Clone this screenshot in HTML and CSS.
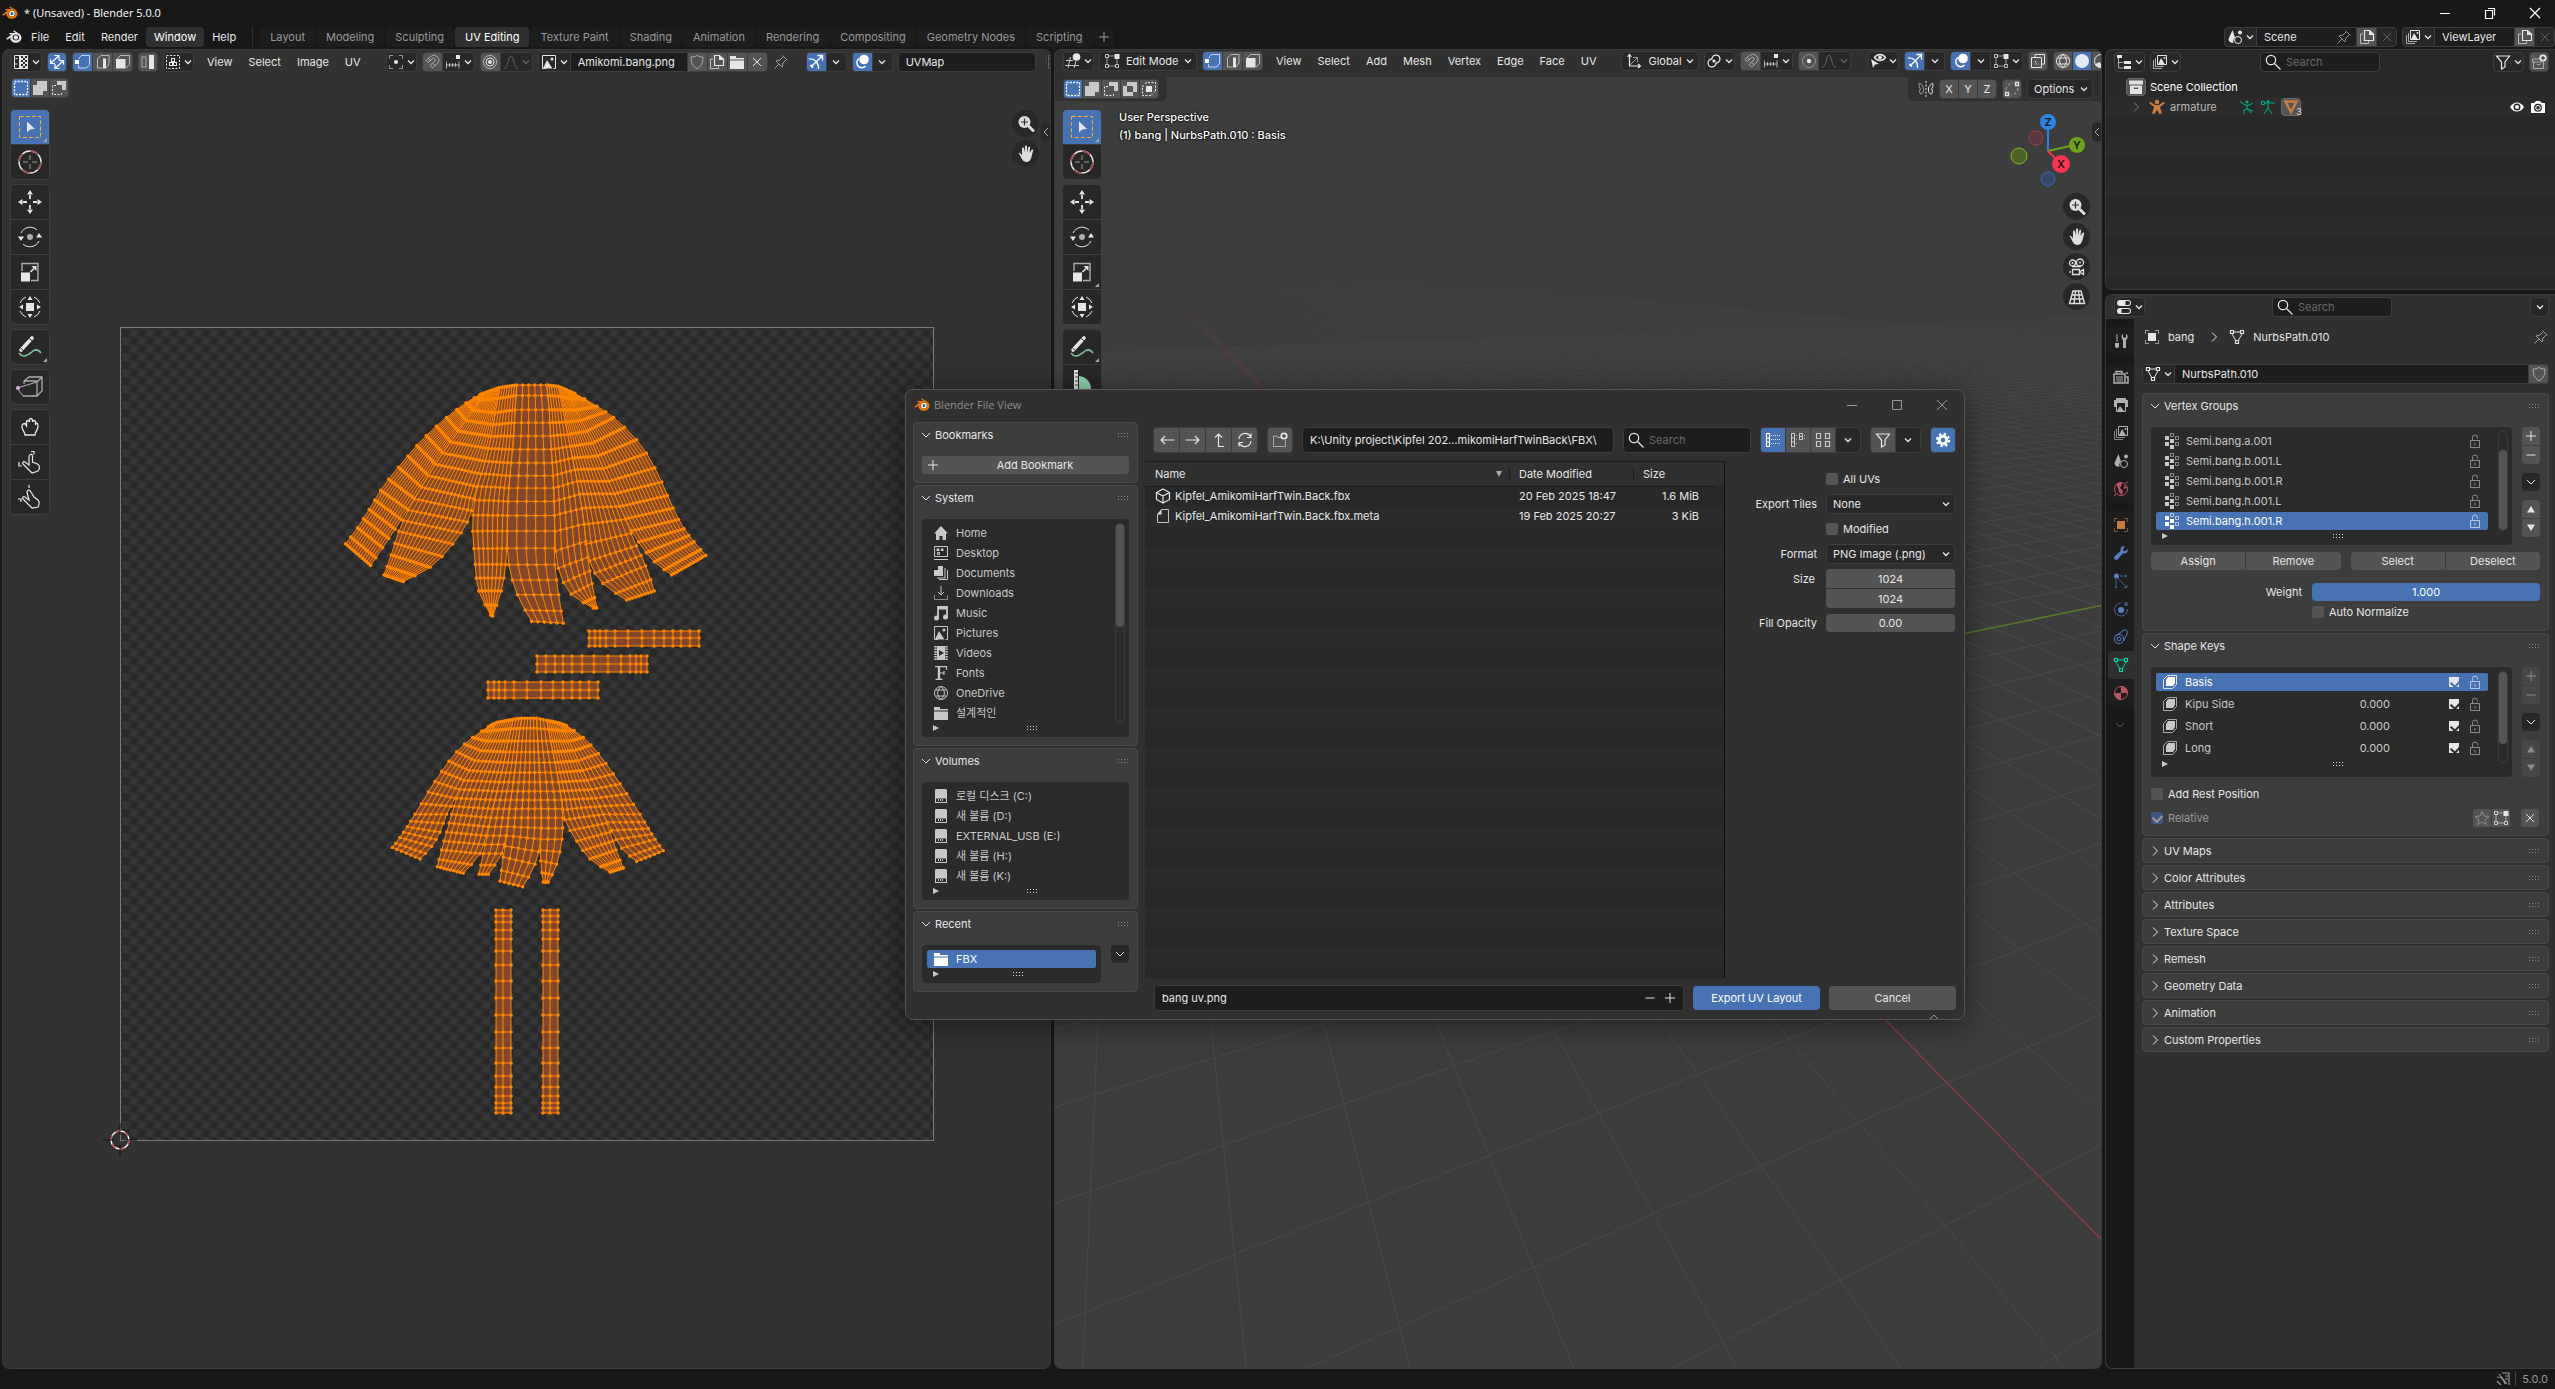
FILE: index.html
```html
<!DOCTYPE html>
<html lang="en">
<head>
<meta charset="utf-8">
<title>* (Unsaved) - Blender 5.0.0</title>
<link rel="stylesheet" href="styles.css">
</head>
<body>
<svg class="sprite" aria-hidden="true">
  <symbol id="chev" viewBox="0 0 8 16"><path d="M1 6.500l3 3 3-3" stroke-width="1.300"/></symbol>
  <symbol id="down" viewBox="0 0 16 16"><path d="M4 6l4 4 4-4"/></symbol>
  <symbol id="right" viewBox="0 0 16 16"><path d="M6 3.500l4.500 4.500-4.500 4.500"/></symbol>
  <symbol id="left" viewBox="0 0 16 16"><path d="M10 4L6 8l4 4"/></symbol>
  <symbol id="grip" viewBox="0 0 12 6"><path d="M1 1.500h10M1 4.500h10" stroke-dasharray="1 2"/></symbol>
  <symbol id="play" viewBox="0 0 8 8"><path class="f" d="M1 1l6 3-6 3z"/></symbol>
  <symbol id="blender" viewBox="0 0 16 16"><path class="f" fill-rule="evenodd" d="M8.200 1.600c-.6-.4-1.300.4-.7.900L9.400 4H3.800c-.9 0-.9 1.300 0 1.300h2L.7 9.200c-.8.7.1 1.900 1 1.200l2.600-2c0 3.200 2.500 5.400 5.600 5.400 3.200 0 5.600-2.200 5.600-5 0-1.700-.7-2.900-1.900-3.900zM9.900 5.500c1.900 0 3.300 1.300 3.300 3s-1.400 3-3.300 3-3.300-1.300-3.300-3 1.400-3 3.300-3z"/><circle class="eye" cx="9.900" cy="8.500" r="2.200"/></symbol>
  <symbol id="uved" viewBox="0 0 16 16"><path d="M1.500 1.500h5M1.500 1.500v13h5M1.500 10h3M2.500 4.500h2"/><path class="f" d="M6 1h9v14H6z"/><path stroke="#282828" stroke-width="2" d="M8 3h2M12 3h2M10 5h2M8 7h2M12 7h2M10 9h2M8 11h2M12 11h2M10 13h2"/></symbol>
  <symbol id="sync" viewBox="0 0 16 16"><path stroke-width="1.200" d="M1.500 9.500L10 1.500M10 6V1.500H5.500M6 14.500l8.500-8M6 10v4.500h4.500M1.500 5.500v4H6M14.500 10.500v-4H10"/></symbol>
  <symbol id="vert" viewBox="0 0 16 16"><path opacity=".7" d="M4.500 5V3.500l2-2h8v9l-3 3.500h-8V11"/><rect class="f" x="0" y="6" width="4" height="4"/></symbol>
  <symbol id="edge" viewBox="0 0 16 16"><path opacity=".7" d="M7.500 14h-5V5l3.500-3.500h8v8.500L11 14"/><rect class="f" x="8" y="4.500" width="3" height="10"/></symbol>
  <symbol id="face" viewBox="0 0 16 16"><path opacity=".7" d="M2 5l3.500-3.500h9v9L11 14"/><rect class="f" x="1" y="5" width="9.500" height="9.500"/></symbol>
  <symbol id="island" viewBox="0 0 16 16"><rect opacity=".6" x="2" y="3" width="4" height="10"/><rect class="f" x="9" y="1" width="5" height="14"/></symbol>
  <symbol id="sticky" viewBox="0 0 16 16"><rect x="1.500" y="1.500" width="13" height="13" stroke-dasharray="2 1.500"/><rect x="6.500" y="4.500" width="3" height="3"/><rect x="4.500" y="8.500" width="3" height="3"/><rect x="8.500" y="8.500" width="3" height="3"/></symbol>
  <symbol id="pivot" viewBox="0 0 16 16"><path opacity=".6" d="M1.500 5V1.500H5M11 1.500h3.500V5M14.500 11v3.500H11M5 14.500H1.500V11"/><circle class="f" cx="8" cy="8" r="2"/></symbol>
  <symbol id="magnet" viewBox="0 0 16 16"><path opacity=".6" d="M2 6.500l4.500-4a5 5 0 017.500 6.500L8.500 14 6 11.500l5-4.500a1.800 1.800 0 00-2.300-2.500l-4.700 4zM4.500 4.500L6.500 7M11 11.500L8.500 9.500"/></symbol>
  <symbol id="inc" viewBox="0 0 16 16"><path opacity=".7" d="M1.500 7.500v7M14 7.500v7M1.500 11H14M4.500 9v4M7.500 9v4M10.500 9v4"/><rect class="f" x="11" y="1" width="4" height="4"/></symbol>
  <symbol id="prop" viewBox="0 0 16 16"><circle class="f" cx="8" cy="8" r="2"/><circle cx="8" cy="8" r="4"/><circle opacity=".7" cx="8" cy="8" r="6.500"/></symbol>
  <symbol id="propoff" viewBox="0 0 16 16"><circle class="f" cx="8" cy="8" r="2.200"/><circle opacity=".4" cx="8" cy="8" r="6.500"/></symbol>
  <symbol id="falloff" viewBox="0 0 16 16"><path d="M1 14.500c4 0 4.500-12.500 7-12.500s3 12.500 7 12.500"/></symbol>
  <symbol id="image" viewBox="0 0 16 16"><path d="M5 14.500H1.500v-13h13v13h-2"/><path class="f" d="M2 14.500L6 6l5.500 8.500z"/><circle class="f" cx="11" cy="5" r="1.500"/></symbol>
  <symbol id="shield" viewBox="0 0 16 16"><path opacity=".6" d="M8 1.500c2 1.200 4 1.500 6 1.500 0 5-1 9-6 11.800C3 12 2 8 2 3c2 0 4-.3 6-1.500z"/></symbol>
  <symbol id="copy" viewBox="0 0 16 16"><path opacity=".7" d="M4 5H1.500v9.500h8V12"/><path stroke-width="1.200" d="M10.500 1.500h-5v10h9V5z"/><path class="f" d="M10 1v5h5z"/></symbol>
  <symbol id="folder" viewBox="0 0 16 16"><path class="f" d="M1 2h6v2h8v1.500H1zM1 6.500h14V15H1z"/></symbol>
  <symbol id="x" viewBox="0 0 16 16"><path d="M4 4l8 8M12 4l-8 8"/></symbol>
  <symbol id="pin" viewBox="0 0 16 16"><path d="M9.500 1.500l5 5M10.500 2.500L7 6 3 7l6 6 1-4 3.500-3.500M6 10l-4.500 4.500"/></symbol>
  <symbol id="gizmo" viewBox="0 0 16 16"><path stroke-width="1.300" d="M3 13l11-11M9.500 1.500h5v5M1 5c6-.5 10 4 9.500 10M2 11.500h2.500V14"/></symbol>
  <symbol id="overlay" viewBox="0 0 16 16"><circle class="f" cx="10" cy="5.500" r="4.800"/><path stroke-width="1.500" d="M5 4.500A5 5 0 1 0 11.500 12"/></symbol>
  <symbol id="selset" viewBox="0 0 16 16"><rect x="1.500" y="1.500" width="13" height="13" stroke-width="1.300" stroke-dasharray="2 1.250"/></symbol>
  <symbol id="seladd" viewBox="0 0 16 16"><path class="f" opacity=".8" d="M5 1h10v10h-4v4H1V5h4z"/></symbol>
  <symbol id="selsub" viewBox="0 0 16 16"><path class="f" opacity=".8" d="M6 1h9v9h-4V5H6z"/><path stroke-dasharray="2 1.500" d="M5 5.500H1.500v9h9V12"/></symbol>
  <symbol id="selxor" viewBox="0 0 16 16"><path class="f" opacity=".8" fill-rule="evenodd" d="M5 1h10v10h-4v4H1V5h4zm0 4v6h6V5z"/></symbol>
  <symbol id="seland" viewBox="0 0 16 16"><rect class="f" x="5" y="5" width="6" height="6"/><path stroke-dasharray="2 1.500" d="M5 3V1.500h9.500V11H13M3 5H1.500v9.500H11V13"/></symbol>
  <symbol id="tselect" viewBox="0 0 24 24"><rect x="1.500" y="1.500" width="21" height="21" stroke="#ffb030" stroke-dasharray="4 2.200"/><path class="f" d="M9 6.500v11l3-3 5-.5z"/></symbol>
  <symbol id="tcursor" viewBox="0 0 24 24"><circle cx="12" cy="12" r="11" stroke-width="1.400"/><circle cx="12" cy="12" r="11" stroke="#a84a4a" stroke-width="1.400" stroke-dasharray="8.640 8.640"/><path opacity=".6" d="M12 5v5M12 14v5M5 12h5M14 12h5"/></symbol>
  <symbol id="tmove" viewBox="0 0 24 24"><path stroke-width="1.800" d="M12 5v4M12 15v4M5 12h4M15 12h4"/><path class="f" d="M12 0l3 4.500H9zM12 24l3-4.500H9zM0 12l4.500-3v6zM24 12l-4.500-3v6z"/></symbol>
  <symbol id="trotate" viewBox="0 0 24 24"><path d="M3 8a10 10 0 0116-3M21 16a10 10 0 01-16 3"/><circle class="f" opacity=".7" cx="12" cy="12" r="3"/><path class="f" d="M0 11.500h6L3 16zM18 12.500h6L21 8z"/></symbol>
  <symbol id="tscale" viewBox="0 0 24 24"><path opacity=".7" stroke-width="1.400" d="M4 11V3.500h16v17h-7"/><rect class="f" x="3" y="12.500" width="9" height="9"/><path class="f" d="M18.500 6v5l-5-5z"/><path stroke-width="1.600" d="M16 8.500l-3.500 3.500"/></symbol>
  <symbol id="ttrans" viewBox="0 0 24 24"><path d="M8 2a11 11 0 00-6 6M16 2a11 11 0 016 6M8 22a11 11 0 01-6-6M16 22a11 11 0 006-6"/><rect class="f" x="8" y="8" width="8" height="8"/><path class="f" d="M12 1l2.500 4h-5zM12 23l2.500-4h-5zM1 12l4-2.500v5zM23 12l-4-2.500v5z"/></symbol>
  <symbol id="tannot" viewBox="0 0 24 24"><path stroke="#7fc49c" stroke-width="1.500" d="M1 18c5 7 11 0 14-2s6-1 8 2"/><path stroke-width="3.600" stroke-linecap="round" d="M3 15L14 3"/><path stroke="#282828" d="M11 3.500l4 3M2.500 13l3 2.500"/></symbol>
  <symbol id="tmeasure" viewBox="0 0 24 24"><path class="mint" d="M9 6a13 13 0 0112 14v4H9z"/><path stroke-width="4" d="M6 0v24"/><path stroke="#444" d="M5 3h3M5 7h3M5 11h3M5 15h3"/></symbol>
  <symbol id="trip" viewBox="0 0 28 24"><path stroke-width="1.300" opacity=".7" d="M8 9V6l5-4h13v14l-5 5H7M21 7v14M21 7l5-5M8 6h13"/><path stroke="#c8a4d4" d="M1 13l20-6M1 13l6 8"/><circle class="lilac" cx="2" cy="13" r="2"/></symbol>
  <symbol id="tgrab" viewBox="0 0 24 24"><path stroke-width="1.300" d="M7 20h10c0-3 3-5 3-9 0-2-.5-3-2-3l-.5 2V7c0-2-2.500-2-3 0V5c-.5-2-3-2-3 0v2c-.5-2-3-2-3 0v4L7 8.500c-2 0-3 1-3 3 0 4 3 5 3 8.500z"/></symbol>
  <symbol id="trelax" viewBox="0 0 24 24"><path stroke-width="1.200" d="M14 23l-9-9c-1-1 0-3 2-2l4 3V7c0-3 3-4 3.500-1v6l5 2c3 2 2 5 .5 7zM13 1.500h3v3M1 12v4h3"/></symbol>
  <symbol id="tpinch" viewBox="0 0 24 24"><path stroke-width="1.200" d="M14 23l-9-9c-1-1 0-3 2-2l4 3-2-8c1-3 3-2 4 0l3 5 4 3c2 2 1 5 0 7zM11 0v3M0 14h3v3"/></symbol>
  <symbol id="nzoom" viewBox="0 0 18 18"><circle class="f" cx="7.500" cy="7" r="6"/><path stroke-width="3" stroke-linecap="round" d="M12 11.500l4 4"/><path stroke="#2a2a2a" stroke-width="1.200" d="M4 7h7M7.500 3.500v7"/></symbol>
  <symbol id="nhand" viewBox="0 0 18 18"><path class="f" d="M1.500 8c1.500-.8 2.500 1 3.500 2.500L5 3.500c0-1.500 2-1.500 2 0l.6 4L8 1.500c0-1.300 2-1.300 2 0l.2 6 1-5c.3-1.300 2-1 1.900.3l-.6 5.400 1.700-3c.7-1.200 2.400-.6 1.900.8-1.300 3.500-1 6.500-3.200 9.500-1.200 1.800-5.200 2-7 0C4.300 13.500 3.200 10 1.500 8z"/></symbol>
  <symbol id="ncam" viewBox="0 0 18 18"><g stroke-width="1.300"><circle cx="4.500" cy="5" r="3"/><circle cx="12" cy="4.500" r="3.500"/><path d="M4 8.500h9M4.500 11.500h7v5h-7zM11.500 14l4-2.500v5zM2 13v2"/></g><circle class="f" cx="4.500" cy="5" r="1"/><circle class="f" cx="12" cy="4.500" r="1"/></symbol>
  <symbol id="npersp" viewBox="0 0 18 18"><path stroke-width="1.400" d="M5 3h8l3.500 12.500h-15zM4 7h10M3 11h12M7.500 3L6 15.500M10.500 3L12 15.500"/></symbol>
  <symbol id="v3d" viewBox="0 0 16 16"><path opacity=".8" d="M1 7.500h7M0 12.500h14M5.500 4L3 15M11 8L9 15"/><circle class="f" cx="11.500" cy="4" r="3.800"/></symbol>
  <symbol id="emode" viewBox="0 0 16 16"><path opacity=".6" d="M5 3h5M3 5v6M5 13h6M13 6v5"/><path d="M1.500 1.500h3v3h-3zM1.500 11.500h3v3h-3zM11.500 11.500h3v3h-3z" opacity=".8"/><rect class="f" x="10.500" y="1" width="5" height="5"/></symbol>
  <symbol id="axes" viewBox="0 0 16 16"><path stroke-width="1.200" d="M3.500 13V2M1.500 4l2-2.500L5.500 4M3 13h11M12 11l2.500 2-2.500 2"/><path opacity=".6" d="M4 12l7-7M7 4.500h4.500V9"/></symbol>
  <symbol id="link" viewBox="0 0 16 16"><path stroke-width="1.300" d="M6 6.500a4 4 0 114.500 3.500M10 9.500a4 4 0 11-4.500-3.500"/><circle class="f" cx="8" cy="8" r="1.600"/></symbol>
  <symbol id="vis" viewBox="0 0 16 16"><path stroke-width="1.400" d="M4.500 4.500c3-4 8-4 11 0-3 4-8 4-11 0z"/><circle class="f" cx="10" cy="4.500" r="2"/><path class="f" d="M1 6l8 5-4 .5L3 15z"/></symbol>
  <symbol id="xray" viewBox="0 0 16 16"><path d="M5 4V1.500h9.500V11H12M1.500 4.500h10v10h-10z"/><path stroke-dasharray="1.500 1.500" d="M5.500 8V11H9"/></symbol>
  <symbol id="wire" viewBox="0 0 16 16"><circle cx="8" cy="8" r="6.500"/><path d="M2.500 5h11M2.500 11h11M8 1.500c-4.500 4-4.500 9 0 13M8 1.500c4.500 4 4.500 9 0 13"/></symbol>
  <symbol id="solid" viewBox="0 0 16 16"><circle class="f" cx="8" cy="8" r="7" opacity=".85"/></symbol>
  <symbol id="matp" viewBox="0 0 16 16"><circle cx="8" cy="8" r="6.500"/><path class="f" d="M8 1a7 7 0 017 7L8 9zM2 11l5-2 2 5.500C6 15 3 14 2 11z"/></symbol>
  <symbol id="bfly" viewBox="0 0 16 16"><path stroke-dasharray="2 1.500" d="M8 0v16"/><path opacity=".6" d="M5.500 7C4 3 1 1.500 1 3c0 2 .5 4 1.500 5C1 9 1.500 13 3 13s2.500-2 2.500-4z"/><path d="M10.500 7C12 3 15 1.500 15 3c0 2-.5 4-1.500 5 1.500 1 1 5-.5 5s-2.500-2-2.500-4z"/></symbol>
  <symbol id="automerge" viewBox="0 0 16 16"><path d="M1.500 11.500h3v3h-3zM11.500 1.500h3v3h-3z" stroke-width="1.300"/><path opacity=".6" stroke-dasharray="3 2" d="M2 9c.5-4 3-6.500 7-7M14 7c-.5 4-3 6.500-7 7"/></symbol>
  <symbol id="scene" viewBox="0 0 16 16"><path class="f" d="M5.500 1L1.500 10c0 3 3 4.500 5 3.500-.5-2 0-3.500 1.500-5z"/><circle cx="11" cy="11" r="3.500"/><circle class="f" cx="13" cy="3.500" r="2"/></symbol>
  <symbol id="vlayer" viewBox="0 0 16 16"><path d="M5.500 1.500h9v9h-9z"/><path opacity=".7" d="M3.500 4v8.500H12M1.500 6v8.500H10"/><path class="f" d="M6 10.500L9 4l4 6.500z"/><circle class="f" cx="12.500" cy="4" r="1"/></symbol>
  <symbol id="outl" viewBox="0 0 16 16"><path opacity=".7" d="M2.500 4v10h5M2.500 8.500h5"/><path class="f" d="M1 1h5v3H1zM8 7h7v3H8zM8 12h7v3H8z"/></symbol>
  <symbol id="search" viewBox="0 0 16 16"><circle cx="6" cy="6" r="4.700" stroke-width="1.200"/><path stroke-width="1.200" d="M9.500 9.500l6 6"/></symbol>
  <symbol id="filter" viewBox="0 0 16 16"><path stroke-width="1.200" d="M1.500 2h13L10 8v5l-3.500 2V8z"/></symbol>
  <symbol id="newcol" viewBox="0 0 16 16"><path opacity=".6" d="M9 5H1.500v3h10M2.500 8v6.500h10V8M6 10.500h3"/><circle class="f" cx="12" cy="4" r="3.600"/><path stroke="#444" stroke-width="1.300" d="M10 4h4M12 2v4"/></symbol>
  <symbol id="coll" viewBox="0 0 16 16"><path class="f" fill-rule="evenodd" d="M1 1.500h14v4H1zM2 6.500h12V15H2zm4 2v1.500h4V8.500z"/></symbol>
  <symbol id="arma" viewBox="0 0 16 16"><circle class="f" cx="8" cy="3" r="2.200"/><path class="f" d="M1 2.500l5 3.500h4l5-3.500.5 2L11 8l2 6.500-2.500.5L8 11l-2.500 4-2.500-.5L5 8 .5 4.500z"/></symbol>
  <symbol id="pose" viewBox="0 0 16 16"><path d="M1 2.500l5 3.500h4l4-2M8 6v4l6 2M8 10l-3 1v4M9 10l3 4"/><circle class="f" cx="8" cy="3" r="1.500"/></symbol>
  <symbol id="armd" viewBox="0 0 16 16"><path d="M4 4h8M8 5v4l4 6M8 9l-4 6M1.500 2.500h3v3h-3zM12 4h3"/><circle class="f" cx="8" cy="2.500" r="1.500"/></symbol>
  <symbol id="tri" viewBox="0 0 16 16"><path stroke-width="2.600" d="M2.500 2.500h11L8 13z"/></symbol>
  <symbol id="eyei" viewBox="0 0 16 16"><path class="f" fill-rule="evenodd" d="M1 8c3.500-6 10.500-6 14 0-3.500 6-10.500 6-14 0zm7-3.500a3.500 3.500 0 100 7 3.500 3.500 0 000-7z"/><circle class="f" cx="8" cy="8" r="2"/></symbol>
  <symbol id="cam" viewBox="0 0 16 16"><path class="f" fill-rule="evenodd" d="M1 4h3l2-2h4l2 2h3v10H1zm7 .8a4 4 0 100 8 4 4 0 000-8z"/><circle cx="8" cy="8.800" r="2.300"/></symbol>
  <symbol id="props" viewBox="0 0 16 16"><path class="f" fill-rule="evenodd" d="M4 1h8a3 3 0 010 6H4a3 3 0 010-6zm5.500 1v4H12a2 2 0 000-4zM4 9h8a3 3 0 010 6H4a3 3 0 010-6zm1.500 1v4H12a2 2 0 000-4z"/></symbol>
  <symbol id="ptool" viewBox="0 0 16 16"><path d="M4 1v8"/><path class="f" d="M2 10h4v3l-1 2H3l-1-2zM10 1v3l1.500 1L13 4V1c2 1 2.500 4 0 6v8h-3V7C8 5 8 2 10 1z"/></symbol>
  <symbol id="prend" viewBox="0 0 16 16"><path stroke-width="1.500" d="M1 5h11v9H1zM3 4V2.500h6V4M13 4h2M13 8h2v6h-2"/><path d="M3 8h7M3 10h7M3 12h7"/></symbol>
  <symbol id="pout" viewBox="0 0 16 16"><path class="f" d="M3 1h10v2h2v7h-2V6H3v4H1V3h2z"/><path d="M3.500 6v8.500h9V6"/><path class="f" d="M4 14l3-5 4 5z"/></symbol>
  <symbol id="world" viewBox="0 0 16 16"><circle cx="8" cy="8" r="6.500"/><path class="f" d="M3 3c3-2 5-2 6 0L7 7l3 3-1 4-3-3-1-4zM11 4l3 3-3 1z"/><path d="M13 2l2-1M1 15l2-2"/></symbol>
  <symbol id="object" viewBox="0 0 16 16"><rect class="f" x="4" y="4" width="8" height="8"/><path opacity=".6" d="M1.500 5V1.500H5M11 1.500h3.500V5M14.500 11v3.500H11M5 14.500H1.500V11"/></symbol>
  <symbol id="modi" viewBox="0 0 16 16"><path class="f" d="M14.500 4l-3 2.500L9.800 5l2-3.500C9 .8 7 3 7.600 6L1.500 11.500c-1.500 2 1 4.500 3 3L10 8.300c3 .8 5.500-1.300 4.500-4.300z"/></symbol>
  <symbol id="parti" viewBox="0 0 16 16"><circle class="f" cx="3.500" cy="3" r="2.500"/><path opacity=".7" d="M3 6v8M4.500 5l9 9M7 3h7M2 14.500h2M13 1.500v3M11 14.500h3V12"/></symbol>
  <symbol id="phys" viewBox="0 0 16 16"><circle class="f" cx="8" cy="9" r="3"/><path opacity=".7" d="M8 2a6.500 6.500 0 106.500 6"/><circle class="f" opacity=".6" cx="13" cy="3" r="2"/></symbol>
  <symbol id="constr" viewBox="0 0 16 16"><circle cx="6" cy="10" r="4.700"/><circle cx="6" cy="10" r="2"/><path d="M2 7.500L11 1c3-.5 4 1.500 3 4l-3.500 7"/></symbol>
  <symbol id="mesh" viewBox="0 0 16 16"><path d="M4 3h8M3 5l4 7M13 5l-4 7"/><path stroke-width="1.200" d="M1.500 1.500h3v3h-3zM11.500 1.500h3v3h-3zM6.500 11.500h3v3h-3z"/></symbol>
  <symbol id="mat" viewBox="0 0 16 16"><circle cx="8" cy="8" r="6.500"/><path class="f" d="M8 1a7 7 0 017 7H8zM8 8v7a7 7 0 01-7-7z"/></symbol>
  <symbol id="vgroup" viewBox="0 0 16 16"><path class="f" d="M1 3h4v4H1zM1 9h4v4H1zM6 6h4v4H6zM6 12h4v4H6z"/><path opacity=".6" d="M6.500 .5h3v3h-3zM11.500 3.500h3v3h-3zM11.500 9.500h3v3h-3z"/></symbol>
  <symbol id="lock" viewBox="0 0 12 16"><path opacity=".6" d="M1.500 7.500h9v7h-9zM3.500 7V4.500a2.500 2.500 0 015 0v1M6 10v2.500"/></symbol>
  <symbol id="skey" viewBox="0 0 16 16"><path opacity=".8" d="M1.500 5.500l4-4h9v9l-4 4h-9z"/><path class="f" d="M4 6l2-3h7v6l-2 3H4z"/></symbol>
  <symbol id="plus" viewBox="0 0 16 16"><path d="M8 3v10M3 8h10"/></symbol>
  <symbol id="minus" viewBox="0 0 16 16"><path d="M3.500 8h9"/></symbol>
  <symbol id="tup" viewBox="0 0 16 16"><path class="f" d="M4 11.500h8L8 5z"/></symbol>
  <symbol id="tdown" viewBox="0 0 16 16"><path class="f" d="M4 4.500h8L8 11z"/></symbol>
  <symbol id="star" viewBox="0 0 16 16"><path d="M8 1.500l2 4.500 5 .5-4 3.200 1.200 4.800L8 12l-4.200 2.500L5 9.700 1 6.500 6 6z"/></symbol>
  <symbol id="back" viewBox="0 0 16 16"><path stroke-width="1.200" d="M2 8h13M6 4L2 8l4 4"/></symbol>
  <symbol id="fwd" viewBox="0 0 16 16"><path stroke-width="1.200" d="M1 8h13M10 4l4 4-4 4"/></symbol>
  <symbol id="up" viewBox="0 0 16 16"><path stroke-width="1.200" d="M13 14.500H7.500V2M4 5.500L7.500 2 11 5.500"/></symbol>
  <symbol id="refresh" viewBox="0 0 16 16"><path stroke-width="1.200" d="M2 7c.5-6 8.500-7.500 11.500-2.500M14 1.500v4h-4M14 9c-.5 6-8.500 7.500-11.500 2.500M2 14.500v-4h4"/></symbol>
  <symbol id="newfold" viewBox="0 0 16 16"><path opacity=".6" d="M9 5.500H6L5 4H1.500v10.500h12V8"/><circle class="f" cx="12" cy="4" r="3.600"/><path stroke="#444" stroke-width="1.300" d="M10 4h4M12 2v4"/></symbol>
  <symbol id="lvert" viewBox="0 0 16 16"><path stroke-width="1.200" d="M1.500 1.500h3v13h-3zM1.500 6h3M1.500 10h3"/><path stroke-dasharray="1 1" d="M6 3.500h10M6 7.500h10M6 11.500h10" opacity=".8"/></symbol>
  <symbol id="lhor" viewBox="0 0 16 16"><path opacity=".8" d="M1.500 1.500h3v13h-3zM1.500 6h3M1.500 10h3M9.500 1.500h3v6h-3zM9.500 4.500h3"/><path stroke-dasharray="1 1" opacity=".7" d="M6 3.500h2M6 7.500h2M6 11.500h2M14 3.500h2M14 6.500h2"/></symbol>
  <symbol id="thumbs" viewBox="0 0 16 16"><path opacity=".8" stroke-width="1.200" d="M1.500 1.500h4v5h-4zM10.500 1.500h4v5h-4zM1.500 9.500h4v5h-4zM10.500 9.500h4v5h-4z"/></symbol>
  <symbol id="gear" viewBox="0 0 16 16"><circle cx="8" cy="8" r="3.800" stroke-width="3"/><circle cx="8" cy="8" r="6" stroke-width="2.400" stroke-dasharray="2.350 2.350"/></symbol>
  <symbol id="cube" viewBox="0 0 16 16"><path stroke-width="1.200" d="M8 1l6.500 3.500v7L8 15l-6.500-3.500v-7zM1.500 4.500L8 8l6.500-3.500M8 8v7"/></symbol>
  <symbol id="file" viewBox="0 0 16 16"><path opacity=".8" d="M6.500 1.500h7v13h-11V6"/><path class="f" d="M6.500 1v5.500H2z"/></symbol>
  <symbol id="home" viewBox="0 0 16 16"><path class="f" d="M8 1l7 7.500h-2V15H9.500v-4h-3v4H3V8.500H1z"/></symbol>
  <symbol id="desk" viewBox="0 0 16 16"><path d="M1.500 1.500h13v10h-13zM1 14.500h14M4.500 7.500h2v2h-2z"/><path class="f" d="M3.500 3.500h3v2.500h-3zM8 3.500h2.500v2.500H8z"/></symbol>
  <symbol id="docs" viewBox="0 0 16 16"><path class="f" d="M5 1h5v10H1V5h4z"/><path d="M12 3v10H4M14.500 5v9.500H6"/></symbol>
  <symbol id="dload" viewBox="0 0 16 16"><path d="M8 1v9M5 7l3 3 3-3"/><path opacity=".6" d="M1.500 10v4.500h13V10"/></symbol>
  <symbol id="music" viewBox="0 0 16 16"><path stroke-width="1.800" d="M5 13V2h9v10"/><path stroke-width="3" d="M5 3h9"/><circle class="f" cx="3.500" cy="13" r="2.500"/><circle class="f" cx="12.500" cy="12" r="2.500"/></symbol>
  <symbol id="video" viewBox="0 0 16 16"><path class="f" fill-rule="evenodd" d="M4 1h8v14H4zm2 4v6l5-3z"/><path stroke-width="2.500" stroke-dasharray="1.500 1" d="M2.500 1v14M13.500 1v14"/></symbol>
  <symbol id="font" viewBox="0 0 16 16"><path stroke-width="2.400" d="M6 2v12"/><path stroke-width="1.200" d="M2 1.600h11.500V5M2.500 14.400h7M7 8h4M11 6v4"/></symbol>
  <symbol id="disk" viewBox="0 0 16 16"><path class="f" fill-rule="evenodd" d="M3 1h10l1 1v13H2V2zm0 9.500v3.500h10v-3.500z"/><path d="M5.500 11v2M7.500 11v2M9.500 11v2"/></symbol>
  <symbol id="net" viewBox="0 0 16 16"><path stroke-width="1.200" d="M7 2h7v12M2 6c5 0 6 2 8 7M2 10l4 4M4 3l8 10M10 5h3M10 8h3"/></symbol>
</svg>

<header class="titlebar">
  <svg class="i orange"><use href="#blender"/></svg><span>* (Unsaved) - Blender 5.0.0</span>
  <div class="wctl">
    <button aria-label="Minimize"><svg class="i"><path d="M3 8.500h10"/></svg></button>
    <button aria-label="Restore"><svg class="i"><path stroke-width="1.200" d="M3.500 5.500h7v8h-7zM6 3.500h6.500v7"/></svg></button>
    <button aria-label="Close"><svg class="i"><path stroke-width="1.200" d="M3 3l10 10M13 3L3 13"/></svg></button>
  </div>
</header>

<div class="topbar">
  <button class="logo" aria-label="Blender"><svg class="i"><use href="#blender"/></svg></button>
  <nav class="menus"><button>File</button><button>Edit</button><button>Render</button><button class="lit">Window</button><button>Help</button></nav>
  <nav class="tabs"><button>Layout</button><button>Modeling</button><button>Sculpting</button><button class="on">UV Editing</button><button>Texture Paint</button><button>Shading</button><button>Animation</button><button>Rendering</button><button>Compositing</button><button>Geometry Nodes</button><button>Scripting</button><button class="addtab" aria-label="Add workspace"><svg class="i"><use href="#plus"/></svg></button></nav>
  <div class="ids">
    <div class="grp"><button class="dk w31" aria-label="Browse scene"><svg class="i"><use href="#scene"/></svg><svg class="c"><use href="#chev"/></svg></button><input class="fld w79" aria-label="Scene name" value="Scene"><span class="pinbox"><svg class="i dim"><use href="#pin"/></svg></span><button class="tg" aria-label="New scene"><svg class="i"><use href="#copy"/></svg></button><button class="dk off" aria-label="Delete scene" disabled><svg class="i"><use href="#x"/></svg></button></div>
    <div class="grp"><button class="dk w31" aria-label="Browse view layer"><svg class="i"><use href="#vlayer"/></svg><svg class="c"><use href="#chev"/></svg></button><input class="fld w79" aria-label="View layer name" value="ViewLayer"><button class="tg" aria-label="New view layer"><svg class="i"><use href="#copy"/></svg></button><button class="dk off" aria-label="Remove view layer" disabled><svg class="i"><use href="#x"/></svg></button></div>
  </div>
</div>

<main class="areas">
  <section class="area uv">
    <svg class="scene" id="uvscene"></svg>
    <div class="head">
      <button class="dk w31 solo" aria-label="Editor type"><svg class="i"><use href="#uved"/></svg><svg class="c"><use href="#chev"/></svg></button>
      <button class="tg on solo" aria-label="Sync selection"><svg class="i"><use href="#sync"/></svg></button>
      <div class="grp"><button class="tg on" aria-label="Vertex"><svg class="i"><use href="#vert"/></svg></button><button class="tg" aria-label="Edge"><svg class="i"><use href="#edge"/></svg></button><button class="tg" aria-label="Face"><svg class="i"><use href="#face"/></svg></button></div>
      <button class="tg solo" aria-label="Island"><svg class="i"><use href="#island"/></svg></button>
      <button class="dk w31 solo" aria-label="Sticky selection"><svg class="i"><use href="#sticky"/></svg><svg class="c"><use href="#chev"/></svg></button>
      <nav class="menus"><button>View</button><button>Select</button><button>Image</button><button>UV</button></nav>
      <button class="dk w31 solo" aria-label="Pivot"><svg class="i"><use href="#pivot"/></svg><svg class="c"><use href="#chev"/></svg></button>
      <div class="grp"><button class="tg" aria-label="Snap"><svg class="i"><use href="#magnet"/></svg></button><button class="dk w31" aria-label="Snap to"><svg class="i"><use href="#inc"/></svg><svg class="c"><use href="#chev"/></svg></button></div>
      <div class="grp"><button class="tg" aria-label="Proportional editing"><svg class="i"><use href="#prop"/></svg></button><button class="dk w31 off" aria-label="Falloff"><svg class="i"><use href="#falloff"/></svg><svg class="c"><use href="#chev"/></svg></button></div>
      <div class="grp"><button class="dk w31" aria-label="Browse image"><svg class="i"><use href="#image"/></svg><svg class="c"><use href="#chev"/></svg></button><input class="fld w116" aria-label="Image name" value="Amikomi.bang.png"><button class="tg" aria-label="Fake user"><svg class="i"><use href="#shield"/></svg></button><button class="tg" aria-label="New image"><svg class="i"><use href="#copy"/></svg></button><button class="tg" aria-label="Open image"><svg class="i"><use href="#folder"/></svg></button><button class="tg" aria-label="Unlink"><svg class="i"><use href="#x"/></svg></button></div>
      <svg class="i dim"><use href="#pin"/></svg>
      <div class="grp push12"><button class="tg on" aria-label="Gizmos"><svg class="i"><use href="#gizmo"/></svg></button><button class="dk" aria-label="Gizmo options"><svg class="c"><use href="#chev"/></svg></button></div>
      <div class="grp"><button class="tg on" aria-label="Overlays"><svg class="i"><use href="#overlay"/></svg></button><button class="dk" aria-label="Overlay options"><svg class="c"><use href="#chev"/></svg></button></div>
      <input class="fld solo w138" aria-label="UV map" value="UVMap">
      <button class="dk solo push5 off" aria-label="Channels"><svg class="i"><use href="#uved"/></svg></button>
    </div>
    <div class="sub"><div class="grp s"><button class="tg on" aria-label="Set"><svg class="i"><use href="#selset"/></svg></button><button class="tg" aria-label="Extend"><svg class="i"><use href="#seladd"/></svg></button><button class="tg" aria-label="Subtract"><svg class="i"><use href="#selsub"/></svg></button></div></div>
    <div class="body">
      <div class="tools">
        <div><button class="on more" aria-label="Select"><svg class="t"><use href="#tselect"/></svg></button><button aria-label="Cursor"><svg class="t"><use href="#tcursor"/></svg></button></div>
        <div><button aria-label="Move"><svg class="t"><use href="#tmove"/></svg></button><button aria-label="Rotate"><svg class="t"><use href="#trotate"/></svg></button><button aria-label="Scale"><svg class="t"><use href="#tscale"/></svg></button><button aria-label="Transform"><svg class="t"><use href="#ttrans"/></svg></button></div>
        <div><button class="more" aria-label="Annotate"><svg class="t"><use href="#tannot"/></svg></button></div>
        <div><button aria-label="Rip region"><svg class="t wide"><use href="#trip"/></svg></button></div>
        <div><button aria-label="Grab"><svg class="t"><use href="#tgrab"/></svg></button><button aria-label="Relax"><svg class="t"><use href="#trelax"/></svg></button><button aria-label="Pinch"><svg class="t"><use href="#tpinch"/></svg></button></div>
      </div>
      <div class="navs"><button aria-label="Zoom"><svg><use href="#nzoom"/></svg></button><button aria-label="Pan"><svg><use href="#nhand"/></svg></button></div>
      <button class="fold" aria-label="Show sidebar"><svg class="i"><use href="#left"/></svg></button>
    </div>
  </section>

  <section class="area view">
    <svg class="scene" id="floor"></svg>
    <div class="head bar">
      <button class="dk w31 solo" aria-label="Editor type"><svg class="i"><use href="#v3d"/></svg><svg class="c"><use href="#chev"/></svg></button>
      <label class="sel w98 solo"><svg class="i"><use href="#emode"/></svg><select aria-label="Mode"><option>Edit Mode</option></select><svg class="c"><use href="#chev"/></svg></label>
      <div class="grp"><button class="tg on" aria-label="Vertex"><svg class="i"><use href="#vert"/></svg></button><button class="tg" aria-label="Edge"><svg class="i"><use href="#edge"/></svg></button><button class="tg" aria-label="Face"><svg class="i"><use href="#face"/></svg></button></div>
      <nav class="menus"><button>View</button><button>Select</button><button>Add</button><button>Mesh</button><button>Vertex</button><button>Edge</button><button>Face</button><button>UV</button></nav>
      <label class="sel w78 solo"><svg class="i"><use href="#axes"/></svg><select aria-label="Orientation"><option>Global</option></select><svg class="c"><use href="#chev"/></svg></label>
      <button class="dk w31 solo" aria-label="Pivot"><svg class="i"><use href="#link"/></svg><svg class="c"><use href="#chev"/></svg></button>
      <div class="grp"><button class="tg" aria-label="Snap"><svg class="i"><use href="#magnet"/></svg></button><button class="dk w31" aria-label="Snap to"><svg class="i"><use href="#inc"/></svg><svg class="c"><use href="#chev"/></svg></button></div>
      <div class="grp"><button class="tg" aria-label="Proportional editing"><svg class="i"><use href="#propoff"/></svg></button><button class="dk w31 off" aria-label="Falloff"><svg class="i"><use href="#falloff"/></svg><svg class="c"><use href="#chev"/></svg></button></div>
      <button class="dk w31 solo push12" aria-label="Visibility"><svg class="i"><use href="#vis"/></svg><svg class="c"><use href="#chev"/></svg></button>
      <div class="grp"><button class="tg on" aria-label="Gizmos"><svg class="i"><use href="#gizmo"/></svg></button><button class="dk" aria-label="Gizmo options"><svg class="c"><use href="#chev"/></svg></button></div>
      <div class="grp"><button class="tg on" aria-label="Overlays"><svg class="i"><use href="#overlay"/></svg></button><button class="dk" aria-label="Overlay options"><svg class="c"><use href="#chev"/></svg></button><button class="dk w31" aria-label="Mesh overlays"><svg class="i"><use href="#emode"/></svg><svg class="c"><use href="#chev"/></svg></button></div>
      <button class="tg solo" aria-label="X-ray"><svg class="i"><use href="#xray"/></svg></button>
      <div class="grp s"><button class="tg" aria-label="Wireframe"><svg class="i"><use href="#wire"/></svg></button><button class="tg on" aria-label="Solid"><svg class="i"><use href="#solid"/></svg></button><button class="tg" aria-label="Material"><svg class="i"><use href="#matp"/></svg></button></div>
    </div>
    <div class="sub">
      <div class="tab"><div class="grp s"><button class="tg on" aria-label="Set"><svg class="i"><use href="#selset"/></svg></button><button class="tg" aria-label="Extend"><svg class="i"><use href="#seladd"/></svg></button><button class="tg" aria-label="Subtract"><svg class="i"><use href="#selsub"/></svg></button><button class="tg" aria-label="Invert"><svg class="i"><use href="#selxor"/></svg></button><button class="tg" aria-label="Intersect"><svg class="i"><use href="#seland"/></svg></button></div></div>
      <div class="tab r"><svg class="i"><use href="#bfly"/></svg><div class="grp s"><button class="tg">X</button><button class="tg">Y</button><button class="tg">Z</button></div><button class="tg solo" aria-label="Auto merge"><svg class="i"><use href="#automerge"/></svg></button><button class="dk solo w66">Options<svg class="c"><use href="#chev"/></svg></button></div>
    </div>
    <div class="body">
      <div class="tools">
        <div><button class="on more" aria-label="Select"><svg class="t"><use href="#tselect"/></svg></button><button aria-label="Cursor"><svg class="t"><use href="#tcursor"/></svg></button></div>
        <div><button aria-label="Move"><svg class="t"><use href="#tmove"/></svg></button><button aria-label="Rotate"><svg class="t"><use href="#trotate"/></svg></button><button class="more" aria-label="Scale"><svg class="t"><use href="#tscale"/></svg></button><button aria-label="Transform"><svg class="t"><use href="#ttrans"/></svg></button></div>
        <div><button class="more" aria-label="Annotate"><svg class="t"><use href="#tannot"/></svg></button><button aria-label="Measure"><svg class="t"><use href="#tmeasure"/></svg></button></div>
      </div>
      <p class="info">User Perspective<br>(1) bang | NurbsPath.010 : Basis</p>
      <div class="navs">
        <svg class="axis" viewBox="0 0 78 78" aria-label="View axes">
          <circle cx="27" cy="28" r="7" fill="#5a3a40" stroke="#a33a4a"/><circle cx="39" cy="69" r="7" fill="#35496a" stroke="#2f6cb5"/><circle cx="10" cy="46" r="8" fill="#4c6427" stroke="#7db91f"/>
          <g stroke-width="2"><path stroke="#2c82e0" d="M39 41V18"/><path stroke="#6da11e" d="M39 41l22-5"/><path stroke="#f8354f" d="M39 41l8 8"/></g>
          <g stroke="none"><circle cx="39" cy="12" r="8" fill="#2c82e6"/><circle cx="68" cy="35" r="8" fill="#6da11e"/><circle cx="52" cy="54" r="9" fill="#fb3553"/></g>
          <text x="39" y="16">Z</text><text x="68" y="39">Y</text><text x="52" y="58">X</text>
        </svg>
        <button aria-label="Zoom"><svg><use href="#nzoom"/></svg></button><button aria-label="Pan"><svg><use href="#nhand"/></svg></button><button aria-label="Camera"><svg><use href="#ncam"/></svg></button><button aria-label="Perspective"><svg><use href="#npersp"/></svg></button>
      </div>
      <button class="fold" aria-label="Show sidebar"><svg class="i"><use href="#left"/></svg></button>
    </div>
  </section>

  <aside class="side">
    <section class="area outliner">
      <div class="ohead">
        <button class="dk w31 solo" aria-label="Editor type"><svg class="i"><use href="#outl"/></svg><svg class="c"><use href="#chev"/></svg></button>
        <button class="dk w31 solo" aria-label="Display mode"><svg class="i"><use href="#vlayer"/></svg><svg class="c"><use href="#chev"/></svg></button>
        <label class="find w120 a"><svg class="i"><use href="#search"/></svg><input placeholder="Search" aria-label="Search outliner"></label>
        <button class="dk w31 solo" aria-label="Filter"><svg class="i"><use href="#filter"/></svg><svg class="c"><use href="#chev"/></svg></button>
        <button class="tg solo" aria-label="New collection"><svg class="i"><use href="#newcol"/></svg></button>
      </div>
      <div class="tree">
        <div class="node"><span class="box"><svg class="i"><use href="#coll"/></svg></span><span class="bright">Scene Collection</span></div>
        <div class="node kid"><svg class="i dim"><use href="#right"/></svg><svg class="i o"><use href="#arma"/></svg><span>armature</span><svg class="i g"><use href="#pose"/></svg><svg class="i g"><use href="#armd"/></svg><span class="box o"><svg class="i"><use href="#tri"/></svg><sub>3</sub></span><svg class="i w end"><use href="#eyei"/></svg><svg class="i w"><use href="#cam"/></svg></div>
      </div>
    </section>

    <section class="area props">
      <div class="ohead">
        <button class="dk w31 solo" aria-label="Editor type"><svg class="i"><use href="#props"/></svg><svg class="c"><use href="#chev"/></svg></button>
        <label class="find w120 b"><svg class="i"><use href="#search"/></svg><input placeholder="Search" aria-label="Search properties"></label>
        <button class="dk solo" aria-label="Options"><svg class="c"><use href="#chev"/></svg></button>
      </div>
      <div class="pbody">
        <nav class="ptabs">
          <div><button aria-label="Tool"><svg class="i"><use href="#ptool"/></svg></button></div>
          <div><button aria-label="Render"><svg class="i"><use href="#prend"/></svg></button><button aria-label="Output"><svg class="i"><use href="#pout"/></svg></button><button aria-label="View layer"><svg class="i"><use href="#vlayer"/></svg></button><button aria-label="Scene"><svg class="i"><use href="#scene"/></svg></button><button class="red" aria-label="World"><svg class="i"><use href="#world"/></svg></button></div>
          <div><button class="o" aria-label="Object"><svg class="i"><use href="#object"/></svg></button><button class="bl" aria-label="Modifiers"><svg class="i"><use href="#modi"/></svg></button><button class="bl" aria-label="Particles"><svg class="i"><use href="#parti"/></svg></button><button class="bl" aria-label="Physics"><svg class="i"><use href="#phys"/></svg></button><button class="bl" aria-label="Constraints"><svg class="i"><use href="#constr"/></svg></button><button class="g cur" aria-label="Data"><svg class="i"><use href="#mesh"/></svg></button><button class="red" aria-label="Material"><svg class="i"><use href="#mat"/></svg></button></div>
          <svg class="i mute"><use href="#down"/></svg>
        </nav>
        <div class="panels">
          <div class="crumb"><svg class="i"><use href="#object"/></svg><span>bang</span><svg class="i"><use href="#right"/></svg><svg class="i"><use href="#mesh"/></svg><span>NurbsPath.010</span><svg class="i dim end"><use href="#pin"/></svg></div>
          <div class="grp data"><button class="dk w31" aria-label="Browse mesh"><svg class="i"><use href="#mesh"/></svg><svg class="c"><use href="#chev"/></svg></button><input class="fld" aria-label="Mesh name" value="NurbsPath.010"><button class="tg" aria-label="Fake user"><svg class="i"><use href="#shield"/></svg></button></div>

          <section class="panel">
            <h2><svg class="i"><use href="#down"/></svg>Vertex Groups<svg class="grip"><use href="#grip"/></svg></h2>
            <div class="lrow">
              <div class="list">
                <ul>
                  <li><svg class="i"><use href="#vgroup"/></svg>Semi.bang.a.001<svg class="l"><use href="#lock"/></svg></li>
                  <li><svg class="i"><use href="#vgroup"/></svg>Semi.bang.b.001.L<svg class="l"><use href="#lock"/></svg></li>
                  <li><svg class="i"><use href="#vgroup"/></svg>Semi.bang.b.001.R<svg class="l"><use href="#lock"/></svg></li>
                  <li><svg class="i"><use href="#vgroup"/></svg>Semi.bang.h.001.L<svg class="l"><use href="#lock"/></svg></li>
                  <li class="cur"><svg class="i"><use href="#vgroup"/></svg>Semi.bang.h.001.R<svg class="l"><use href="#lock"/></svg></li>
                </ul>
                <span class="sb low"></span>
                <div class="foot"><svg class="p"><use href="#play"/></svg><svg class="grip"><use href="#grip"/></svg></div>
              </div>
              <div class="ops"><div class="col"><button aria-label="Add"><svg class="i"><use href="#plus"/></svg></button><button aria-label="Remove"><svg class="i"><use href="#minus"/></svg></button></div><button class="dk solo" aria-label="Specials"><svg class="i"><use href="#down"/></svg></button><div class="col"><button aria-label="Move up"><svg class="i"><use href="#tup"/></svg></button><button aria-label="Move down"><svg class="i"><use href="#tdown"/></svg></button></div></div>
            </div>
            <div class="acts"><div><button>Assign</button><button>Remove</button></div><div><button>Select</button><button>Deselect</button></div></div>
            <div class="frow"><label for="wt">Weight</label><input id="wt" class="num blue" value="1.000"></div>
            <div class="frow"><span></span><label class="chk"><input type="checkbox">Auto Normalize</label></div>
          </section>

          <section class="panel">
            <h2><svg class="i"><use href="#down"/></svg>Shape Keys<svg class="grip"><use href="#grip"/></svg></h2>
            <div class="lrow">
              <div class="list keys">
                <ul>
                  <li class="cur"><svg class="i"><use href="#skey"/></svg>Basis<input type="checkbox" aria-label="Enable Basis" checked><svg class="l"><use href="#lock"/></svg></li>
                  <li><svg class="i"><use href="#skey"/></svg>Kipu Side<output>0.000</output><input type="checkbox" aria-label="Enable Kipu Side" checked><svg class="l"><use href="#lock"/></svg></li>
                  <li><svg class="i"><use href="#skey"/></svg>Short<output>0.000</output><input type="checkbox" aria-label="Enable Short" checked><svg class="l"><use href="#lock"/></svg></li>
                  <li><svg class="i"><use href="#skey"/></svg>Long<output>0.000</output><input type="checkbox" aria-label="Enable Long" checked><svg class="l"><use href="#lock"/></svg></li>
                </ul>
                <span class="sb high"></span>
                <div class="foot"><svg class="p"><use href="#play"/></svg><svg class="grip"><use href="#grip"/></svg></div>
              </div>
              <div class="ops"><div class="col mutedops"><button aria-label="Add" disabled><svg class="i"><use href="#plus"/></svg></button><button aria-label="Remove" disabled><svg class="i"><use href="#minus"/></svg></button></div><button class="dk solo" aria-label="Specials"><svg class="i"><use href="#down"/></svg></button><div class="col mutedops"><button aria-label="Move up" disabled><svg class="i"><use href="#tup"/></svg></button><button aria-label="Move down" disabled><svg class="i"><use href="#tdown"/></svg></button></div></div>
            </div>
            <label class="chk rest"><input type="checkbox">Add Rest Position</label>
            <div class="rel"><label class="chk dis"><input type="checkbox" checked disabled>Relative</label><div class="grp s"><button class="tg half" aria-label="Pin shape"><svg class="i"><use href="#star"/></svg></button><button class="tg" aria-label="Edit mode"><svg class="i"><use href="#emode"/></svg></button></div><button class="tg solo" aria-label="Clear"><svg class="i"><use href="#x"/></svg></button></div>
          </section>

          <section class="panel shut"><h2><svg class="i"><use href="#right"/></svg>UV Maps<svg class="grip"><use href="#grip"/></svg></h2></section>
          <section class="panel shut"><h2><svg class="i"><use href="#right"/></svg>Color Attributes<svg class="grip"><use href="#grip"/></svg></h2></section>
          <section class="panel shut"><h2><svg class="i"><use href="#right"/></svg>Attributes<svg class="grip"><use href="#grip"/></svg></h2></section>
          <section class="panel shut"><h2><svg class="i"><use href="#right"/></svg>Texture Space<svg class="grip"><use href="#grip"/></svg></h2></section>
          <section class="panel shut"><h2><svg class="i"><use href="#right"/></svg>Remesh<svg class="grip"><use href="#grip"/></svg></h2></section>
          <section class="panel shut"><h2><svg class="i"><use href="#right"/></svg>Geometry Data<svg class="grip"><use href="#grip"/></svg></h2></section>
          <section class="panel shut"><h2><svg class="i"><use href="#right"/></svg>Animation<svg class="grip"><use href="#grip"/></svg></h2></section>
          <section class="panel shut"><h2><svg class="i"><use href="#right"/></svg>Custom Properties<svg class="grip"><use href="#grip"/></svg></h2></section>
        </div>
      </div>
    </section>
  </aside>
</main>

<footer class="status"><svg class="i"><use href="#net"/></svg><span>5.0.0</span></footer>

<div class="dialog" role="dialog" aria-label="Blender File View">
  <div class="dtitle"><svg class="i orange"><use href="#blender"/></svg><span>Blender File View</span>
    <div class="wctl dimctl">
      <button aria-label="Minimize"><svg class="i"><path d="M3 8.500h10"/></svg></button>
      <button aria-label="Maximize"><svg class="i"><path d="M3.500 3.500h9v9h-9z"/></svg></button>
      <button aria-label="Close"><svg class="i"><path d="M3 3l10 10M13 3L3 13"/></svg></button>
    </div>
  </div>
  <div class="dmain">
    <div class="places">
      <section class="panel"><h2><svg class="i"><use href="#down"/></svg>Bookmarks<svg class="grip"><use href="#grip"/></svg></h2><button class="addbm"><svg class="i"><use href="#plus"/></svg><span>Add Bookmark</span></button></section>
      <section class="panel"><h2><svg class="i"><use href="#down"/></svg>System<svg class="grip"><use href="#grip"/></svg></h2>
        <div class="list"><ul>
          <li><svg class="i"><use href="#home"/></svg>Home</li>
          <li><svg class="i"><use href="#desk"/></svg>Desktop</li>
          <li><svg class="i"><use href="#docs"/></svg>Documents</li>
          <li><svg class="i"><use href="#dload"/></svg>Downloads</li>
          <li><svg class="i"><use href="#music"/></svg>Music</li>
          <li><svg class="i"><use href="#image"/></svg>Pictures</li>
          <li><svg class="i"><use href="#video"/></svg>Videos</li>
          <li><svg class="i"><use href="#font"/></svg>Fonts</li>
          <li><svg class="i"><use href="#wire"/></svg>OneDrive</li>
          <li><svg class="i"><use href="#folder"/></svg>설계적인</li>
        </ul><span class="sb sys"></span><div class="foot"><svg class="p"><use href="#play"/></svg><svg class="grip"><use href="#grip"/></svg></div></div>
      </section>
      <section class="panel"><h2><svg class="i"><use href="#down"/></svg>Volumes<svg class="grip"><use href="#grip"/></svg></h2>
        <div class="list"><ul>
          <li><svg class="i"><use href="#disk"/></svg>로컬 디스크 (C:)</li>
          <li><svg class="i"><use href="#disk"/></svg>새 볼륨 (D:)</li>
          <li><svg class="i"><use href="#disk"/></svg>EXTERNAL_USB (E:)</li>
          <li><svg class="i"><use href="#disk"/></svg>새 볼륨 (H:)</li>
          <li><svg class="i"><use href="#disk"/></svg>새 볼륨 (K:)</li>
        </ul><div class="foot"><svg class="p"><use href="#play"/></svg><svg class="grip"><use href="#grip"/></svg></div></div>
      </section>
      <section class="panel"><h2><svg class="i"><use href="#down"/></svg>Recent<svg class="grip"><use href="#grip"/></svg></h2>
        <div class="recent"><div class="list"><ul><li class="cur"><svg class="i"><use href="#folder"/></svg>FBX</li></ul><div class="foot"><svg class="p"><use href="#play"/></svg><svg class="grip"><use href="#grip"/></svg></div></div><button class="dk solo" aria-label="Specials"><svg class="i"><use href="#down"/></svg></button></div>
      </section>
    </div>
    <div class="browse">
      <div class="fbar">
        <div class="grp nav4"><button class="tg" aria-label="Back"><svg class="i"><use href="#back"/></svg></button><button class="tg" aria-label="Forward"><svg class="i"><use href="#fwd"/></svg></button><button class="tg" aria-label="Parent"><svg class="i"><use href="#up"/></svg></button><button class="tg" aria-label="Refresh"><svg class="i"><use href="#refresh"/></svg></button></div>
        <button class="tg solo" aria-label="New folder"><svg class="i"><use href="#newfold"/></svg></button>
        <input class="fld solo path" aria-label="Path" value="K:\Unity project\Kipfel 202…mikomiHarfTwinBack\FBX\">
        <label class="find"><svg class="i"><use href="#search"/></svg><input placeholder="Search" aria-label="Search files"></label>
        <div class="grp"><button class="tg on" aria-label="Vertical list"><svg class="i"><use href="#lvert"/></svg></button><button class="tg" aria-label="Horizontal list"><svg class="i"><use href="#lhor"/></svg></button><button class="tg" aria-label="Thumbnails"><svg class="i"><use href="#thumbs"/></svg></button><button class="dk" aria-label="Display settings"><svg class="c"><use href="#chev"/></svg></button></div>
        <div class="grp"><button class="tg" aria-label="Filter"><svg class="i"><use href="#filter"/></svg></button><button class="dk" aria-label="Filter settings"><svg class="c"><use href="#chev"/></svg></button></div>
        <button class="tg on solo" aria-label="Toggle options"><svg class="i"><use href="#gear"/></svg></button>
      </div>
      <div class="mid">
        <div class="files">
          <table>
            <colgroup><col><col class="c2"><col class="c3"></colgroup>
            <thead><tr><th>Name<svg class="p"><path class="f" d="M1 1h6L4 7z"/></svg></th><th>Date Modified</th><th>Size</th></tr></thead>
            <tbody>
              <tr><td><svg class="i"><use href="#cube"/></svg>Kipfel_AmikomiHarfTwin.Back.fbx</td><td>20 Feb 2025 18:47</td><td>1.6 MiB</td></tr>
              <tr><td><svg class="i"><use href="#file"/></svg>Kipfel_AmikomiHarfTwin.Back.fbx.meta</td><td>19 Feb 2025 20:27</td><td>3 KiB</td></tr>
            </tbody>
          </table>
        </div>
        <form class="opts">
          <span></span><label class="chk"><input type="checkbox">All UVs</label>
          <label for="tiles">Export Tiles</label><span class="sel"><select id="tiles"><option>None</option></select><svg class="c"><use href="#chev"/></svg></span>
          <span></span><label class="chk"><input type="checkbox">Modified</label>
          <label for="fmt">Format</label><span class="sel"><select id="fmt"><option>PNG Image (.png)</option></select><svg class="c"><use href="#chev"/></svg></span>
          <label for="sx" class="top">Size</label><span class="pair"><input id="sx" class="num" value="1024"><input class="num" aria-label="Size Y" value="1024"></span>
          <label for="op">Fill Opacity</label><input id="op" class="num" value="0.00">
        </form>
      </div>
      <div class="exec">
        <div class="grp fname"><input class="fld" aria-label="File name" value="bang uv.png"><button aria-label="Decrement"><svg class="i"><use href="#minus"/></svg></button><button aria-label="Increment"><svg class="i"><use href="#plus"/></svg></button></div>
        <button class="go">Export UV Layout</button><button class="no">Cancel</button>
      </div>
    </div>
  </div>
  <svg class="i tick"><path opacity=".6" d="M4 10l4-4 4 4"/></svg>
</div>
<script src="script.js"></script>
</body>
</html>
```
FILE: styles.css
```css
* { box-sizing: border-box; }
body, h2, p, ul { margin: 0; padding: 0; }
body { height: 100vh; display: flex; flex-direction: column; overflow: hidden; background: #181818; color: #e6e6e6; font: 11px/16px Inter, "Noto Sans CJK KR", sans-serif; position: relative; }
button, input, select { font: inherit; color: inherit; border: 0; margin: 0; padding: 0; background: none; min-width: 0; outline: 0; }
h2 { font: inherit; }
ul { list-style: none; }
.sprite { position: absolute; width: 0; height: 0; }
svg { fill: none; stroke: currentColor; flex: none; display: block; }
.f { fill: currentColor; stroke: none; }
.mint { fill: #8fd6ae; stroke: none; }
.lilac { fill: #d8b4e4; stroke: none; }
.eye { fill: var(--eye, currentColor); stroke: var(--ring, none); stroke-width: 1.3; }
.i { width: 16px; height: 16px; }
.c { width: 8px; height: 16px; }
.t { width: 24px; height: 24px; }
.t.wide { width: 28px; }
.p { width: 8px; height: 8px; }
.l { width: 12px; height: 16px; }
.grip { width: 12px; height: 6px; color: #8a8a8a; }
.dim { opacity: .6; }
.orange { color: #ea7600; --eye: #2c5f9a; --ring: #fff; }
.w31 { width: 31px; }
.w66 { width: 66px; }
.w78 { width: 78px; }
.w79 { width: 79px; }
.w98 { width: 98px; }
.w116 { width: 116px; }
.w120 { width: 120px; }
.w138 { width: 138px; }

.titlebar { height: 25px; flex: none; display: flex; align-items: center; gap: 6px; padding-left: 2px; font: 11px/16px "Open Sans", sans-serif; color: #fff; }
.wctl { margin-left: auto; display: flex; gap: 29px; padding-right: 12px; color: #fff; }
.wctl button { height: 20px; }

.topbar { height: 24px; flex: none; display: flex; padding-left: 6px; align-items: center; }
.logo { margin-right: 1px; }
.menus { display: flex; }
.menus button { padding: 0 8px; height: 20px; border-radius: 4px; }
.menus .lit { background: #303030; color: #fff; }
.tabs { display: flex; gap: 1px; margin-left: 8px; padding-left: 7px; border-left: 1px solid #303030; color: #989898; }
.tabs button { height: 20px; padding: 0 10px; border-radius: 4px; background: #1d1d1d; }
.tabs .on { background: #303030; color: #fff; }
.tabs .addtab { width: 20px; padding: 0 2px; }
.ids { margin-left: auto; display: flex; gap: 5px; }
.pinbox { width: 20px; background: #1d1d1d; margin-left: -1px; padding-top: 1px; }

.grp { display: flex; border: 1px solid #3d3d3d; border-radius: 4px; overflow: hidden; height: 20px; flex: none; background: #3d3d3d; gap: 1px; }
.solo { border: 1px solid #3d3d3d; border-radius: 4px; height: 20px; flex: none; }
.dk { background: #282828; display: flex; align-items: center; justify-content: center; gap: 3px; min-width: 19px; flex: none; }
.tg { background: #545454; display: flex; align-items: center; justify-content: center; width: 19px; flex: none; }
.tg.solo { width: 20px; }
.s .tg { width: 18px; }
.tg.on { background: #4772b3; color: #fff; }
.off > svg { opacity: .3; }
.fld { background: #1d1d1d; padding: 0 3px 0 7px; }
.sel { display: flex; align-items: center; background: #282828; padding: 0 4px; border: 1px solid #3d3d3d; border-radius: 4px; height: 20px; }
.sel select { appearance: none; flex: 1; padding: 0 0 0 6px; }
.find { display: flex; align-items: center; gap: 5px; height: 20px; padding-left: 4px; background: #1d1d1d; border: 1px solid #3d3d3d; border-radius: 4px; }
.find input { width: 60px; }
.find input::placeholder { color: #6a6a6a; }
.end { margin-left: auto; }

.areas { flex: 1; min-height: 0; display: grid; grid-template-columns: 1049fr 1048fr 450px; gap: 3px; padding-left: 2px; }
.area { position: relative; border: 1px solid #3a3a3a; border-radius: 7px; overflow: hidden; display: flex; flex-direction: column; min-width: 0; }
.uv { background: #323232; }
.view { background: #3d3d3d; }
.scene { position: absolute; inset: 0; width: 100%; height: 100%; }
.head { position: relative; display: flex; gap: 5px; padding: 2px 0 5px 8px; height: 27px; align-items: center; }
.bar { background: #303030; padding-top: 0; }
.head .menus { padding: 0 12px 0 0; }
.push5 { margin-left: 5px; }
.push12 { margin-left: 12px; }
.sub { position: relative; display: flex; justify-content: space-between; padding-left: 8px; height: 26px; flex: none; padding-top: 1px; }
.view .sub { padding: 0; }
.tab { display: flex; gap: 5px; align-items: center; background: #303030; padding: 0 8px; height: 24px; border-radius: 0 0 5px 0; }
.tab.r { border-radius: 0 0 0 5px; padding-left: 10px; }
.tab.r .dk { justify-content: space-between; padding: 0 4px 0 6px; }
.body { position: relative; flex: 1; display: flex; align-items: flex-start; min-height: 0; padding: 7px 0 0 8px; }
.tools { display: flex; flex-direction: column; gap: 6px; }
.tools > div { display: flex; flex-direction: column; gap: 1px; background: #3d3d3d; box-shadow: 0 0 0 1px #3d3d3d; border-radius: 4px; overflow: hidden; width: 38px; }
.tools button { height: 34px; background: #282828; display: flex; align-items: center; justify-content: center; position: relative; }
.tools .on { background: #4772b3; }
.tools .more::after { content: ""; position: absolute; right: 2px; bottom: 2px; border: 2px solid; border-color: transparent #aaa #aaa transparent; }
.navs { margin-left: auto; display: flex; flex-direction: column; align-items: flex-end; gap: 3px; }
.navs button { width: 27px; height: 27px; border-radius: 50%; background: #282828; display: flex; align-items: center; justify-content: center; color: #ddd; }
.navs button svg { width: 18px; height: 18px; }
.axis { width: 78px; height: 78px; margin: 0 3px 2px 0; }
.axis text { font-size: 11px; font-weight: 600; fill: #1a1a1a; stroke: none; text-anchor: middle; }
.fold { width: 9px; height: 18px; margin: 13px 0 0 2px; background: #282828; border-radius: 4px 0 0 4px; overflow: hidden; display: flex; justify-content: center; align-items: center; color: #aaa; }
.info { margin: -2px 0 0 18px; line-height: 18px; font-weight: 500; color: #fff; text-shadow: 0 0 2px #000, 0 0 2px #000; }

.side { display: flex; flex-direction: column; gap: 4px; min-width: 0; }
.side .area { border-radius: 7px 0 0 7px; border-right: 0; }
.outliner { background: #282828; height: 241px; flex: none; }
.props { background: #303030; flex: 1; min-height: 0; }
.ohead { display: flex; align-items: center; gap: 5px; padding: 0 6px 0 8px; height: 24px; flex: none; }
.find.a { margin: 0 108px 0 auto; }
.find.b { margin: 0 133px 0 auto; }
.tree { flex: 1; padding-top: 3px; background: repeating-linear-gradient(#282828 0 20px, #2b2b2b 20px 40px) 0 3px; }
.node { height: 20px; display: flex; align-items: center; gap: 5px; padding: 0 9px 0 20px; color: #b8b8b8; }
.node .box + .bright { margin-left: -1px; }
.kid { padding-left: 22px; }
.kid .i.o + span { margin-right: 17px; }
.box { background: #545454; border: 1px solid #6a6a6a; border-radius: 4px; width: 20px; height: 18px; display: flex; align-items: center; justify-content: center; position: relative; color: #e0e0e0; }
.box sub { position: absolute; right: -2px; bottom: -2px; font-size: 9px; line-height: 10px; color: #ddd; }
.bright, .w { color: #fff; }
.o, .box.o { color: #c97d42; }
.g { color: #00b389; }
.red { color: #b85560; }
.bl { color: #5680c8; }
.ptabs .g { color: #00d4a3; }

.pbody { flex: 1; display: flex; min-height: 0; }
.ptabs { width: 28px; background: #181818; display: flex; flex-direction: column; align-items: center; gap: 8px; padding-top: 8px; flex: none; }
.ptabs > div { width: 26px; background: #1d1d1d; border-radius: 4px 0 0 4px; align-self: flex-end; color: #b0b0b0; }
.ptabs button { width: 26px; height: 28px; display: flex; align-items: center; justify-content: center; border-radius: 4px 0 0 4px; }
.ptabs .cur { background: #303030; }
.ptabs > .mute { opacity: .35; margin-top: 2px; }
.panels { flex: 1; padding: 8px 6px 0 8px; display: flex; flex-direction: column; gap: 2px; min-width: 0; }
.crumb { display: flex; align-items: center; gap: 8px; height: 20px; padding: 0 0 0 2px; }
.crumb span + .i { margin: 0 -1px 0 4px; }
.crumb span + .i.end { margin: 0 0 0 auto; }
.data { margin: 15px 0 7px; }
.data .fld { flex: 1; }
.panel { background: #3d3d3d; border: 1px solid #494949; border-radius: 4px; padding: 0 8px 8px; }
.panel h2 { height: 24px; display: flex; align-items: center; gap: 1px; margin-left: -4px; }
.panel h2 .grip { margin-left: auto; }
.panels .panel.shut { padding-bottom: 0; height: 25px; }
.lrow { display: flex; gap: 10px; margin-top: 9px; }
.list { position: relative; flex: 1; background: #2b2b2b; border-radius: 4px; padding: 4px 5px 4px; color: #c8c8c8; }
.list ul { padding-right: 19px; }
.list li { height: 20px; display: flex; align-items: center; gap: 6px; padding: 0 7px 0 8px; border-radius: 3px; border: solid #2b2b2b; border-width: 1px 0; }
.list .cur { background: #4772b3; color: #fff; }
.list .l { margin-left: auto; }
.keys li { height: 22px; border-width: 2px 0; gap: 7px; padding-left: 6px; }
.keys output { margin-left: auto; padding-right: 52px; }
.keys li > input { margin: 0 3px 0 0; width: 10px; height: 10px; background: #e6e6e6; border-radius: 0; color: #2b2b2b; }
.keys .cur > input { margin-left: auto; color: #4772b3; }
.keys .l { margin: 0; }
.foot { display: flex; align-items: center; height: 10px; padding-left: 5px; }
.foot .grip { margin: 0 auto; color: #ddd; }
.sb { position: absolute; right: 4px; top: 4px; bottom: 14px; width: 10px; border: 1px solid #3d3d3d; border-radius: 5px; }
.sb::before { content: ""; position: absolute; left: 0; right: 0; top: 0; background: #545454; border-radius: 5px; height: 82%; }
.sb.low::before { top: auto; bottom: 0; }
.sb.high::before { height: 80%; }
.sb.sys::before { height: 52%; }
.ops { width: 18px; display: flex; flex-direction: column; gap: 9px; }
.ops .col { display: flex; flex-direction: column; gap: 1px; }
.ops .col button { height: 18px; width: 18px; background: #545454; display: flex; justify-content: center; align-items: center; }
.ops .col button:first-child { border-radius: 4px 4px 0 0; }
.ops .col button:last-child { border-radius: 0 0 4px 4px; }
.mutedops { opacity: .45; }
.ops .solo, .recent .solo { width: 18px; min-width: 18px; height: 18px; border: 0; }
.acts { display: flex; gap: 10px; margin-top: 7px; }
.acts div { flex: 1; display: flex; gap: 1px; }
.acts button { flex: 1; height: 18px; background: #545454; border-radius: 0 4px 4px 0; }
.acts button:first-child { border-radius: 4px 0 0 4px; }
.acts + .frow { margin-top: 12px; }
.frow { display: grid; grid-template-columns: 151px 1fr; column-gap: 10px; align-items: center; height: 20px; }
.frow > label:first-child { text-align: right; }
.num { background: #545454; border-radius: 4px; text-align: center; height: 18px; width: 100%; }
.num.blue { background: #4772b3; color: #fff; }
.chk { display: flex; align-items: center; gap: 5px; }
input[type=checkbox] { appearance: none; width: 12px; height: 12px; background: #545454; border-radius: 2px; position: relative; flex: none; }
input[type=checkbox]:checked::after { content: ""; position: absolute; left: 3px; top: 1px; width: 5px; height: 7px; border: solid currentColor; border-width: 0 2px 2px 0; transform: rotate(42deg); }
.rest { margin-top: 8px; height: 18px; }
.rel { display: flex; align-items: center; height: 18px; margin-top: 6px; }
.rel .grp { margin-left: auto; margin-right: 9px; }
.half > svg { opacity: .4; }
.dis { color: #989898; }
.dis input:checked { background: #3e5681; }

.status { height: 20px; flex: none; display: flex; justify-content: flex-end; align-items: center; gap: 4px; padding-right: 7px; color: #989898; }
.status span { border-left: 1px solid #444; padding-left: 6px; line-height: 14px; }

.dialog { position: absolute; left: 905px; top: 389px; width: 1060px; height: 631px; background: #303030; border: 1px solid #555; border-radius: 8px; display: flex; flex-direction: column; box-shadow: 0 4px 30px rgba(0,0,0,.5); }
.dtitle { height: 32px; flex: none; display: flex; align-items: center; gap: 4px; padding: 0 0 2px 8px; font: 11px/16px "Open Sans", sans-serif; color: #8c8c8c; }
.dimctl { color: #999; padding-right: 14px; gap: 29px; }
.dmain { flex: 1; display: flex; min-height: 0; }
.places { width: 225px; margin-left: 7px; display: flex; flex-direction: column; gap: 2px; flex: none; }
.places h2 { margin-bottom: 9px; }
.addbm { display: flex; align-items: center; width: 100%; height: 18px; background: #545454; border-radius: 3px; padding-left: 3px; }
.addbm span { flex: 1; }
.places .list li { gap: 7px; padding-left: 6px; }
.recent { display: flex; gap: 10px; }
.recent ul { padding-right: 0; }
.browse { flex: 1; margin-left: 7px; display: flex; flex-direction: column; min-width: 0; }
.fbar { display: flex; gap: 9px; padding: 5px 8px 0 8px; height: 39px; }
.fbar .grp, .fbar .find, .fbar .solo { height: 26px; }
.fbar .tg, .fbar .dk { width: 24px; }
.fbar .nav4 .tg { width: 25px; }
.fbar .tg.solo { width: 26px; }
.fbar .path { flex: 1; }
.fbar .find { width: 128px; }
.mid { flex: 1; display: flex; min-height: 0; }
.files { flex: 1; border-right: 1px solid #111; border-top: 1px solid #1d1d1d; padding-right: 7px; background: linear-gradient(#303030 0 24px, transparent 24px), repeating-linear-gradient(#282828 0 20px, #2b2b2b 20px 40px) 0 25px; }
table { width: 100%; table-layout: fixed; border-collapse: collapse; }
.c2 { width: 124px; }
.c3 { width: 84px; }
th { position: relative; height: 24px; font-weight: inherit; text-align: left; padding: 0 0 0 10px; border-bottom: 1px solid #1d1d1d; }
th + th::before { content: ""; position: absolute; left: 0; top: 5px; height: 13px; border-left: 1px solid #1d1d1d; }
th .p { position: absolute; right: 6px; top: 8px; color: #aaa; }
td { height: 20px; padding: 0 0 0 10px; white-space: nowrap; }
td:last-child { text-align: right; padding-right: 18px; }
td .i { display: inline-block; vertical-align: -4px; margin-right: 4px; }
.opts { width: 239px; padding: 8px 8px 0 0; display: grid; grid-template-columns: 92px 129px; column-gap: 9px; row-gap: 5px; grid-auto-rows: minmax(20px, auto); align-content: start; align-items: center; }
.opts > label:not(.chk) { text-align: right; }
.opts .top { align-self: start; padding: 2px 2px 0 0; }
.opts .sel { padding-left: 0; }
.pair { display: flex; flex-direction: column; gap: 1px; }
.pair .num { height: 19px; border-radius: 4px 4px 0 0; }
.pair .num + .num { border-radius: 0 0 4px 4px; }
.exec { height: 41px; flex: none; display: flex; gap: 9px; padding: 7px 8px 0 9px; }
.fname { flex: 1; height: 26px; background: #1d1d1d; padding-right: 2px; }
.fname .fld { flex: 1; }
.fname button { width: 19px; display: flex; align-items: center; }
.go, .no { height: 24px; margin-top: 1px; border-radius: 4px; width: 127px; background: #545454; }
.go { background: #4772b3; color: #fff; }
.tick { position: absolute; right: 22px; bottom: -6px; }
```
FILE: script.js
```js
const NS = "http://www.w3.org/2000/svg";
function el(parent, name, attrs) {
  const n = document.createElementNS(NS, name);
  for (const k in attrs) n.setAttribute(k, attrs[k]);
  parent.appendChild(n);
  return n;
}

/* UV editor: image tile, UV islands and 2D cursor */
const TILE = { x: 117, y: 277, size: 813 };
const uv = document.getElementById("uvscene");
const defs = el(uv, "defs", {});
const pat = el(defs, "pattern", { id: "chk", width: 16, height: 16, patternUnits: "userSpaceOnUse", x: 7, y: 7 });
el(pat, "rect", { width: 16, height: 16, fill: "#343434", stroke: "none" });
el(pat, "path", { d: "M0 0h8v8H0zM8 8h8v8H8z", fill: "#292929", stroke: "none" });
el(uv, "rect", { x: TILE.x + .5, y: TILE.y + .5, width: TILE.size, height: TILE.size, fill: "url(#chk)", stroke: "#7a7a7a" });

/* Rib control points are stored in island units; toPx places them in the tile. */
const toPx = ([x, y]) => [TILE.x + 180 + x / 3, TILE.y + 23 + y / 2.8];
function along(rib, t) {
  const f = t * (rib.length - 1), i = Math.min(Math.floor(f), rib.length - 2), k = f - i;
  const p0 = rib[Math.max(i - 1, 0)], p1 = rib[i], p2 = rib[i + 1], p3 = rib[Math.min(i + 2, rib.length - 1)];
  return [0, 1].map(a => .5 * (2 * p1[a] + (p2[a] - p0[a]) * k + (2 * p0[a] - 5 * p1[a] + 4 * p2[a] - p3[a]) * k * k + (3 * p1[a] - p0[a] - 3 * p2[a] + p3[a]) * k * k * k));
}
let fill = "", lines = "", dots = "";
function patch(grid) {
  const P = p => p[0].toFixed(1) + " " + p[1].toFixed(1);
  const R = grid.length - 1, C = grid[0].length - 1;
  for (const row of grid) { lines += "M" + row.map(P).join("L"); for (const p of row) dots += "M" + P(p) + "h0"; }
  for (let c = 0; c <= C; c++) lines += "M" + grid.map(r => P(r[c])).join("L");
  fill += "M" + [...grid[0], ...grid.map(r => r[C]), ...[...grid[R]].reverse(), ...grid.map(r => r[0]).reverse()].map(P).join("L") + "z";
}
function lock(ribs, cols, rows) {
  const grid = [];
  for (let r = 0; r <= rows; r++) {
    const row = [];
    for (let c = 0; c <= cols; c++) {
      const f = c / cols * (ribs.length - 1), i = Math.min(Math.floor(f), ribs.length - 2), k = f - i;
      const a = along(ribs[i], r / rows), b = along(ribs[i + 1], r / rows);
      row.push(toPx([a[0] + (b[0] - a[0]) * k, a[1] + (b[1] - a[1]) * k]));
    }
    grid.push(row);
  }
  patch(grid);
}
const A0 = [[540,125],[495,150],[432,195],[368,250],[310,312],[250,382],[212,440],[175,495],[137,543]];
const A1 = [[560,118],[518,172],[470,235],[420,300],[375,368],[330,435],[290,495],[250,550],[212,603]];
const A1b = [[560,118],[518,172],[470,235],[420,300],[375,368],[332,437],[300,500],[275,570],[252,630]];
const A2 = [[600,105],[585,180],[572,250],[552,325],[525,400],[508,470],[465,535],[395,605],[310,648]];
const B0 = [[600,105],[585,180],[572,250],[552,325],[528,400],[518,490],[525,590],[535,670],[572,742]];
const B1 = [[650,98],[645,172],[640,250],[632,330],[625,405],[622,490],[618,590],[605,670],[578,745]];
const C0 = [[650,98],[645,172],[640,250],[632,330],[625,405],[622,490],[625,590],[650,680],[695,760]];
const C1 = [[740,98],[748,172],[752,250],[758,330],[762,405],[764,490],[764,590],[775,680],[790,765]];
const D0 = [[740,98],[748,172],[752,250],[758,330],[762,405],[764,490],[772,600],[810,680],[880,722]];
const D1 = [[775,102],[790,172],[805,245],[820,315],[835,385],[850,470],[862,570],[875,650],[890,722]];
const E0 = [[775,102],[790,172],[805,245],[820,315],[835,385],[850,470],[865,580],[905,650],[980,700]];
const E1 = [[800,112],[830,172],[865,235],[900,310],[935,385],[970,460],[1005,540],[1035,600],[1063,675]];
const F0 = [[800,112],[830,172],[865,235],[900,310],[935,385],[970,460],[1010,530],[1060,590],[1115,630]];
const F1 = [[825,122],[895,160],[948,195],[1022,265],[1075,350],[1113,430],[1148,495],[1180,535],[1217,575]];
lock([A0, A1], 12, 17); lock([A1b, A2], 14, 17); lock([B0, B1], 7, 17); lock([C0, C1], 5, 17);
lock([D0, D1], 5, 17); lock([E0, E1], 9, 17); lock([F0, F1], 14, 17);

const G0 = [[565,1055],[518,1085],[470,1125],[425,1180],[385,1238],[345,1300],[322,1335],[300,1365],[277,1393]];
const G1 = [[590,1043],[560,1095],[525,1150],[492,1205],[465,1255],[440,1300],[420,1350],[395,1390],[360,1425]];
const H0 = [[590,1043],[560,1095],[525,1150],[492,1205],[470,1255],[455,1300],[440,1350],[425,1400],[412,1447]];
const H1 = [[640,1034],[625,1095],[612,1155],[598,1210],[585,1260],[572,1310],[558,1360],[540,1410],[490,1465]];
const I0 = [[640,1034],[625,1095],[612,1155],[598,1210],[585,1260],[572,1310],[562,1360],[550,1410],[537,1468]];
const I1 = [[665,1031],[655,1095],[648,1155],[640,1210],[632,1260],[625,1310],[618,1360],[605,1410],[565,1468]];
const J0 = [[665,1031],[655,1095],[648,1155],[640,1210],[632,1260],[625,1310],[620,1360],[610,1420],[600,1487]];
const J1 = [[710,1031],[713,1095],[717,1155],[720,1210],[722,1260],[724,1310],[722,1370],[705,1440],[668,1503]];
const K0 = [[710,1031],[713,1095],[717,1155],[720,1210],[722,1260],[724,1310],[722,1370],[722,1430],[730,1490]];
const K1 = [[740,1037],[752,1095],[765,1155],[776,1210],[785,1260],[788,1310],[786,1370],[770,1440],[745,1490]];
const L0 = [[740,1037],[752,1095],[765,1155],[776,1210],[785,1260],[795,1315],[830,1375],[870,1425],[930,1462]];
const L1 = [[780,1045],[808,1095],[835,1150],[862,1205],[888,1255],[910,1300],[930,1350],[948,1400],[970,1450]];
const M0 = [[780,1045],[808,1095],[835,1150],[862,1205],[888,1255],[910,1300],[935,1345],[965,1395],[1010,1432]];
const M1 = [[800,1052],[850,1085],[895,1130],[940,1187],[980,1243],[1020,1300],[1045,1340],[1065,1370],[1090,1402]];
lock([G0, G1], 6, 16); lock([H0, H1], 8, 16); lock([I0, I1], 3, 16); lock([J0, J1], 5, 16);
lock([K0, K1], 3, 16); lock([L0, L1], 8, 16); lock([M0, M1], 6, 16);

/* Braids are straight strips; offsets are tile pixels. */
function strip(xs, ys) { patch(ys.map(y => xs.map(x => [TILE.x + x, TILE.y + y]))); }
const wide = [0, 6, 11, 17, 26, 39, 53, 65, 75, 84, 92, 101, 110];
strip(wide.map(v => 469 + v), [304, 311, 319]);
strip(wide.map(v => 527 - v), [329, 337, 345]);
strip(wide.map(v => 368 + v), [355, 363, 371]);
const tall = [0, 6, 12, 20, 29, 41, 55, 71, 88, 105, 122, 138, 153, 166, 177, 186, 193, 198, 203].map(v => 583 + v);
strip([376, 383, 391], tall);
strip([423, 430, 438], tall);
el(uv, "path", { d: fill, fill: "#83482a", stroke: "none" });
el(uv, "path", { d: lines, stroke: "#ff8500", "stroke-width": 1 });
el(uv, "path", { d: dots, stroke: "#ff8500", "stroke-width": 3.6, "stroke-linecap": "round" });

const cur = el(uv, "g", { transform: `translate(${TILE.x} ${TILE.y + TILE.size})` });
el(cur, "circle", { r: 9, stroke: "#fff", "stroke-width": 1.4 });
el(cur, "circle", { r: 9, stroke: "#d04040", "stroke-width": 1.4, "stroke-dasharray": "4.7 4.7" });
el(cur, "path", { d: "M0-17v12M0 5v12M-17 0h12M5 0h12", stroke: "#111" });

/* 3D viewport: floor grid in two-point perspective.
   Each line family meets at its vanishing point and is evenly spaced on any horizontal cut. */
const floor = document.getElementById("floor");
const HORIZON = 205, DEPTH = 1400;
const fd = el(floor, "defs", {});
const grad = el(fd, "linearGradient", { id: "fade", x1: 0, y1: HORIZON, x2: 0, y2: HORIZON + 315, gradientUnits: "userSpaceOnUse" });
el(grad, "stop", { offset: 0, "stop-color": "#fff", "stop-opacity": 0 });
el(grad, "stop", { offset: .06, "stop-color": "#fff", "stop-opacity": .06 });
el(grad, "stop", { offset: .35, "stop-color": "#fff", "stop-opacity": .5 });
el(grad, "stop", { offset: 1, "stop-color": "#fff", "stop-opacity": 1 });
const mask = el(fd, "mask", { id: "far", maskUnits: "userSpaceOnUse", x: 0, y: 0, width: 3000, height: 3000 });
el(mask, "rect", { y: HORIZON, width: 3000, height: 3000, fill: "url(#fade)", stroke: "none" });
const g = el(floor, "g", { mask: "url(#far)" });
const O = [527, 662], VX = 77, VY = 2753;
function ray(vx, slope, attrs) {
  el(g, "line", { x1: vx, y1: HORIZON, x2: vx + slope * DEPTH, y2: HORIZON + DEPTH, ...attrs });
}
const sx = (O[0] - VX) / (O[1] - HORIZON), sy = (O[0] - VY) / (O[1] - HORIZON);
for (let n = -40; n <= 70; n++) {
  if (!n) continue;
  ray(VX, sx + n * .147, { stroke: "#4a4a4a" });
  ray(VY, sy - n * .328, { stroke: "#4a4a4a" });
}
ray(VX, sx, { stroke: "#8a3a42", "stroke-width": 1.5 });
ray(VY, sy, { stroke: "#587a26", "stroke-width": 1.5 });
```
